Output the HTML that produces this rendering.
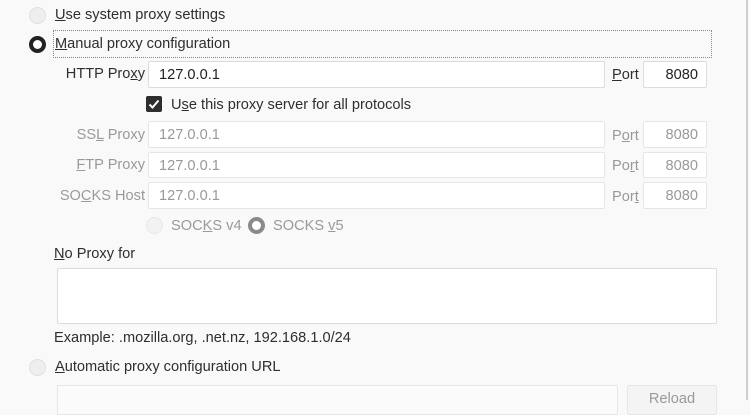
<!DOCTYPE html>
<html><head><style>
body{margin:0;width:750px;height:400px;background:#f9f9f9;font-family:"Liberation Sans",sans-serif;font-size:14.6px;color:#2e2e2e;position:relative;overflow:hidden}
.a{position:absolute;white-space:nowrap}
.dis{color:#999}
.in{position:absolute;background:#fff;border:1px solid #dcdcdc;border-radius:2px;box-sizing:border-box}
.in span{position:absolute;left:10px;top:5px}
.pt span{left:auto;right:8px}
.r{position:absolute;border-radius:50%;box-sizing:border-box;width:17px;height:17px;background:#eee;border:1px solid #e0e0e0}
u{text-decoration:underline}
.lbl{position:absolute;text-align:right;width:145px;left:0}
</style></head><body>
<div style="position:absolute;left:746px;top:0;width:2px;height:400px;background:#cfcfcf"></div>
<div class="r" style="left:29px;top:7px"></div>
<div class="a" style="left:55px;top:7px"><u>U</u>se system proxy settings</div>
<div class="r" style="left:29px;top:36px;background:#fff;border:4px solid #222"></div>
<div style="position:absolute;left:53px;top:30px;width:657px;height:26px;border:1px dotted #888"></div>
<div class="a" style="left:55px;top:36px"><u>M</u>anual proxy configuration</div>

<div class="lbl a" style="top:66px">HTTP Pro<u>x</u>y</div>
<div class="in" style="left:148px;top:61px;width:457px;height:27px;color:#222"><span>127.0.0.1</span></div>
<div class="a" style="left:612px;top:67px"><u>P</u>ort</div>
<div class="in pt" style="left:643px;top:61px;width:64px;height:27px;color:#222"><span>8080</span></div>

<div style="position:absolute;left:146px;top:96px;width:16px;height:16px;background:#2e2e2e;border-radius:2px"><svg width="16" height="16"><path d="M3.5 8.5 L6.5 11.5 L12.5 4.5" stroke="#fff" stroke-width="2" fill="none"/></svg></div>
<div class="a" style="left:171px;top:97px">U<u>s</u>e this proxy server for all protocols</div>

<div class="lbl a dis" style="top:127px">SS<u>L</u> Proxy</div>
<div class="in dis" style="left:148px;top:121px;width:457px;height:27px;border-color:#e6e6e6"><span>127.0.0.1</span></div>
<div class="a dis" style="left:612px;top:128px">P<u>o</u>rt</div>
<div class="in pt dis" style="left:643px;top:121px;width:64px;height:27px;border-color:#e6e6e6"><span>8080</span></div>

<div class="lbl a dis" style="top:157px"><u>F</u>TP Proxy</div>
<div class="in dis" style="left:148px;top:152px;width:457px;height:26px;border-color:#e6e6e6"><span>127.0.0.1</span></div>
<div class="a dis" style="left:612px;top:158px">Po<u>r</u>t</div>
<div class="in pt dis" style="left:643px;top:152px;width:64px;height:26px;border-color:#e6e6e6"><span>8080</span></div>

<div class="lbl a dis" style="top:188px">SO<u>C</u>KS Host</div>
<div class="in dis" style="left:148px;top:182px;width:457px;height:27px;border-color:#e6e6e6"><span>127.0.0.1</span></div>
<div class="a dis" style="left:612px;top:189px">Por<u>t</u></div>
<div class="in pt dis" style="left:643px;top:182px;width:64px;height:27px;border-color:#e6e6e6"><span>8080</span></div>

<div class="r" style="left:146px;top:217px;background:#f2f2f2;border-color:#e8e8e8"></div>
<div class="a dis" style="left:171px;top:218px">SOC<u>K</u>S v4</div>
<div class="r" style="left:248px;top:217px;background:#fff;border:4px solid #8a8a8a"></div>
<div class="a dis" style="left:273px;top:218px">SOCKS <u>v</u>5</div>

<div class="a" style="left:54px;top:246px"><u>N</u>o Proxy for</div>
<div class="in" style="left:57px;top:268px;width:660px;height:56px"></div>
<div class="a" style="left:54px;top:330px">Example: .mozilla.org, .net.nz, 192.168.1.0/24</div>

<div class="r" style="left:29px;top:359px"></div>
<div class="a" style="left:55px;top:359px"><u>A</u>utomatic proxy configuration URL</div>
<div class="in" style="left:57px;top:385px;width:561px;height:30px;background:#fbfbfb;border-color:#e6e6e6"></div>
<div class="in dis" style="left:627px;top:385px;width:90px;height:30px;background:#f4f4f4;border-color:#e6e6e6;text-align:center"><span style="left:0;right:0;top:5px">Reload</span></div>
</body></html>
